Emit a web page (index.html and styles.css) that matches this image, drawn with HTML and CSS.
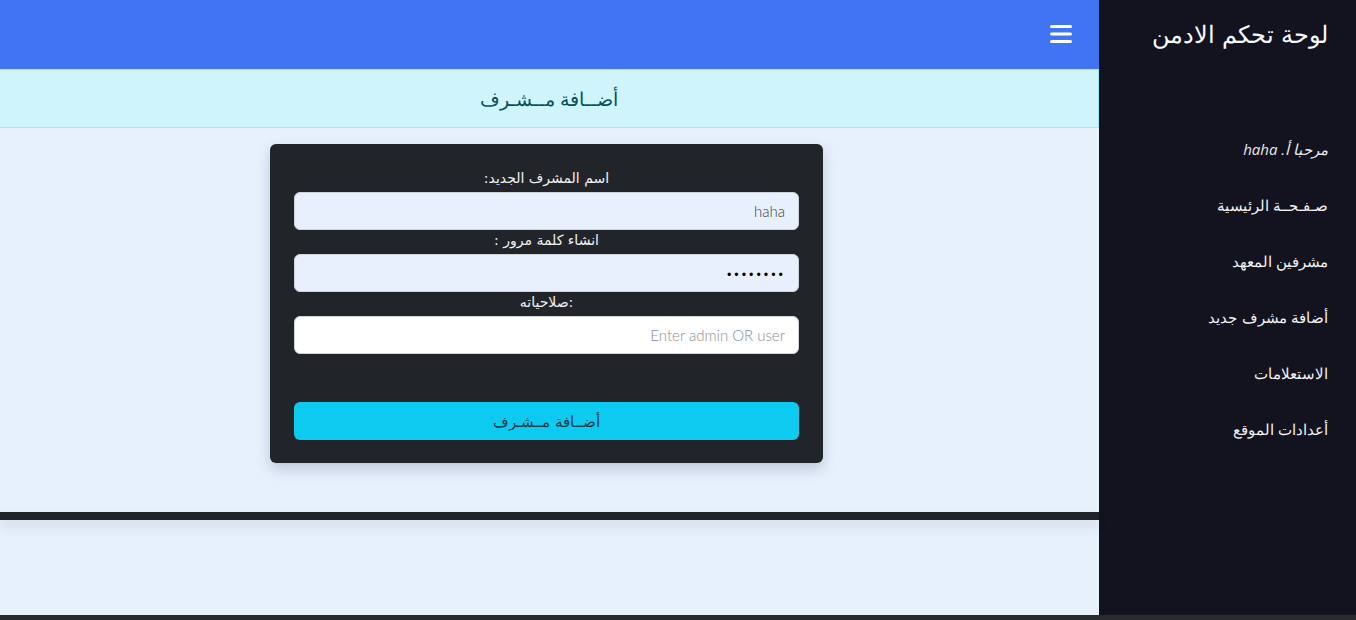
FILE: index.html
```html
<!DOCTYPE html>
<html lang="ar" dir="rtl">
<head>
<meta charset="utf-8">
<title>لوحة تحكم الادمن</title>
<link rel="stylesheet" href="styles.css">
</head>
<body>
<div class="screen">
  <aside class="sidebar">
    <h1 class="brand">لوحة تحكم الادمن</h1>
    <nav class="menu">
      <a class="menu-item greet" href="#">مرحبا أ. haha</a>
      <a class="menu-item" href="#">صـفـحــة الرئيسية</a>
      <a class="menu-item" href="#">مشرفين المعهد</a>
      <a class="menu-item" href="#">أضافة مشرف جديد</a>
      <a class="menu-item" href="#">الاستعلامات</a>
      <a class="menu-item" href="#">أعدادات الموقع</a>
    </nav>
  </aside>
  <div class="content">
    <header class="topbar">
      <button class="toggle" aria-label="menu">
        <svg width="22" height="18" viewBox="0 0 22 18"><rect x="0" y="0" width="22" height="3" rx="1.5" fill="#fff"/><rect x="0" y="7.5" width="22" height="3" rx="1.5" fill="#fff"/><rect x="0" y="15" width="22" height="3" rx="1.5" fill="#fff"/></svg>
      </button>
    </header>
    <div class="alert">أضــافة مــشـرف</div>
    <main class="main">
      <form class="card">
        <label class="label">اسم المشرف الجديد:</label>
        <input class="field filled" type="text" value="haha">
        <label class="label">انشاء كلمة مرور :</label>
        <input class="field filled pass" type="password" value="12345678">
        <label class="label">:صلاحياته</label>
        <input class="field" type="text" placeholder="Enter admin OR user">
        <button class="submit" type="button">أضــافة مــشـرف</button>
      </form>
    </main>
    <div class="footer-bar"></div>
  </div>
</div>
<div class="taskbar"></div>
</body>
</html>
```
FILE: styles.css
```css
html, body {
  margin: 0;
  padding: 0;
  height: 100%;
}
body {
  font-family: "Lato", "DejaVu Sans", sans-serif;
  background: #e7f1fc;
  display: flex;
  flex-direction: column;
  overflow: hidden;
}
.screen {
  display: flex;
  height: 615px;
}
.sidebar {
  width: 257px;
  flex: none;
  background: #12131f;
  padding: 0 28px;
  box-sizing: border-box;
}
.brand {
  margin: 18px 0 0;
  font-size: 24px;
  font-weight: 200;
  color: #f8f9fa;
  line-height: 32px;
  white-space: nowrap;
}
.menu {
  display: flex;
  flex-direction: column;
  margin-top: 87px;
  gap: 32px;
}
.menu-item {
  color: #f1f1f1;
  text-decoration: none;
  font-size: 15px;
  font-weight: 200;
  line-height: 24px;
  white-space: nowrap;
}
.greet {
  font-family: "Open Sans", "DejaVu Sans", sans-serif;
  font-style: italic;
  font-weight: 400;
  color: #e9e9ea;
}
.content {
  flex: 1;
  display: flex;
  flex-direction: column;
}
.topbar {
  height: 69px;
  background: #4174f3;
  display: flex;
  align-items: center;
  padding-right: 27px;
  box-sizing: border-box;
  flex: none;
}
.toggle {
  background: none;
  border: 0;
  padding: 0;
  margin-top: -2px;
  display: flex;
}
.alert {
  height: 59px;
  box-sizing: border-box;
  background: #cff4fc;
  border: 1px solid #9eeaf9;
  border-left: 0;
  color: #055160;
  font-size: 19px;
  font-weight: 200;
  display: flex;
  align-items: center;
  justify-content: center;
  flex: none;
}
.main {
  height: 384px;
  display: flex;
  justify-content: center;
  align-items: flex-start;
  padding-top: 16px;
  box-sizing: border-box;
  flex: none;
}
.card {
  width: 553px;
  box-sizing: border-box;
  background: #212529;
  border-radius: 6px;
  padding: 24px 24px 23px;
  display: flex;
  flex-direction: column;
  box-shadow: 0 6px 14px rgba(40, 60, 90, 0.22);
  margin-right: 6px;
}
.label {
  color: #f1f1f1;
  font-family: "DejaVu Sans", sans-serif;
  font-size: 14px;
  text-align: center;
  height: 24px;
  line-height: 20px;
}
.field {
  height: 38px;
  box-sizing: border-box;
  border: 1px solid #ced4da;
  border-radius: 6px;
  background: #fff;
  padding: 0 13px;
  font-family: "Lato", "DejaVu Sans", sans-serif;
  font-size: 15px;
  font-weight: 300;
  color: #3b3f44;
  text-align: right;
  direction: rtl;
}
.field::placeholder {
  color: #8a8f94;
}
.field.filled {
  background: #e8f0fe;
}
.field.pass {
  font-size: 11px;
  color: #000;
  letter-spacing: 1px;
}
.submit {
  margin-top: 48px;
  height: 38px;
  border: 0;
  border-radius: 6px;
  background: #0dcaf0;
  color: #0b3a44;
  font-family: "Lato", "DejaVu Sans", sans-serif;
  font-size: 15px;
  font-weight: 200;
}
.footer-bar {
  height: 8px;
  background: #212529;
  box-shadow: 0 6px 12px rgba(40, 60, 90, 0.12);
  flex: none;
}
.taskbar {
  height: 5px;
  background: #2a2b2d;
  flex: none;
}
```
